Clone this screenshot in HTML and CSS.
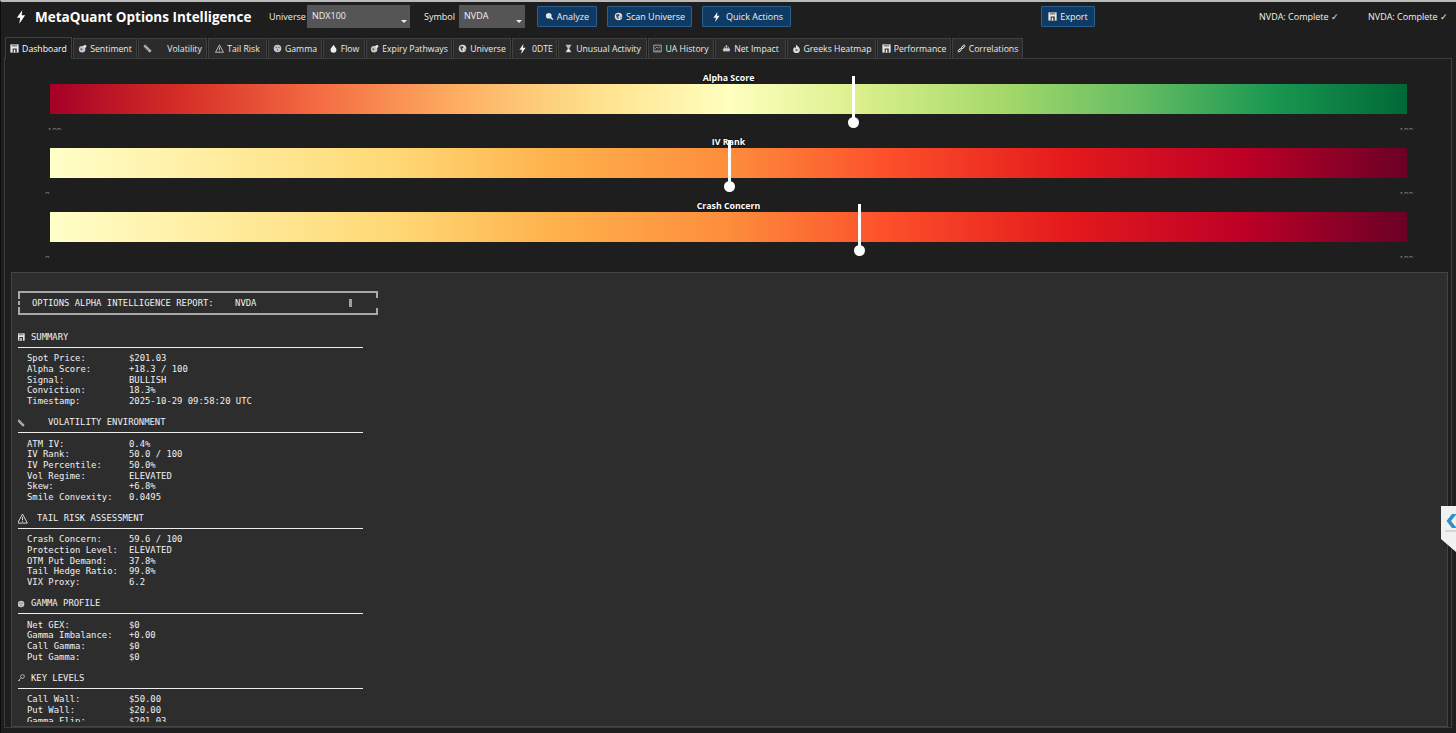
FILE: index.html
```html
<!DOCTYPE html>
<html lang="en">
<head>
<meta charset="utf-8">
<title>MetaQuant Options Intelligence</title>
<link rel="stylesheet" href="styles.css">
</head>
<body>
<svg class="defs" aria-hidden="true">
  <symbol id="i-bolt" viewBox="0 0 12 16"><path d="M7.5 0 1 9h4l-1 7 7-10H6.8z" fill="currentColor"/></symbol>
  <symbol id="i-save" viewBox="0 0 12 12"><path d="M.5.5h11v11H.5z" fill="#e8e8e8"/><path d="M2.500.5h7v3h-7z" fill="#8c8c8c"/><path d="M3.500 6h5.500v5.500H3.500z" fill="#333"/><path d="M5 7.500h2v4H5z" fill="#f4f4f4"/></symbol>
  <symbol id="i-senti" viewBox="0 0 12 12"><circle cx="5.500" cy="7" r="4.300" fill="#c8c8c8"/><path d="M6.500 2.500l3.500-1.500 1.500 2.500-3 2z" fill="#eee"/><circle cx="4.500" cy="7" r="1.300" fill="#555"/></symbol>
  <symbol id="i-ruler" viewBox="0 0 12 12"><path d="M.5 3 3 .5l8.500 8.500-2.500 2.500z" fill="#b4b4b4"/><path d="M3 4l1.200-1.200M5 6l1.200-1.200M7 8l1.200-1.200" stroke="#444" stroke-width=".8"/></symbol>
  <symbol id="i-warn" viewBox="0 0 12 12"><path d="M6 1.200 11.300 11H.7z" fill="none" stroke="#e6e6e6"/><path d="M6 4.500v3.500M6 9v1" stroke="#e6e6e6"/></symbol>
  <symbol id="i-gamma" viewBox="0 0 12 12"><circle cx="6" cy="6" r="5" fill="#c6c6c6"/><circle cx="4.300" cy="4.700" r=".9" fill="#555"/><circle cx="7.700" cy="4.700" r=".9" fill="#555"/><circle cx="6" cy="8" r=".9" fill="#555"/></symbol>
  <symbol id="i-drop" viewBox="0 0 12 12"><path d="M6 1C7.500 4 10 5.500 10 7.700a4 4 0 0 1-8 0C2 5.500 4.500 4 6 1z" fill="#eee"/></symbol>
  <symbol id="i-globe" viewBox="0 0 12 12"><circle cx="6" cy="6" r="5" fill="#ddd"/><path d="M2.500 3.500 6.500 2.500l1 2.500-2 1 1 4-2.500-2zM9 6l1.500.5-2 2.500z" fill="#444"/></symbol>
  <symbol id="i-search" viewBox="0 0 12 12"><circle cx="5" cy="5" r="3.800" fill="#dfe6ee"/><path d="M7.500 7.500l3 2.500" stroke="#eee" stroke-width="2"/></symbol>
  <symbol id="i-hour" viewBox="0 0 12 12"><path d="M2 1h8L7 6l3 5H2l3-5z" fill="#bbb"/><path d="M3.500 10h5L6 7z" fill="#fff"/></symbol>
  <symbol id="i-chart" viewBox="0 0 12 12"><path d="M1 1.500h10v9H1z" fill="none" stroke="#ccc"/><path d="M2.500 7l2.500-3 2 1.500L9.500 3.500M2.500 9h7" fill="none" stroke="#ccc" stroke-width=".8"/></symbol>
  <symbol id="i-ship" viewBox="0 0 14 12"><path d="M6 .8h2v2.500h2.500v2.500l2.500 1-1.500 3.700h-9L1 6.800l2.500-1V3.300H6z" fill="#ccc"/><path d="M5 4h1.200v1.300H5zM7.800 4H9v1.300H7.800zM1 11h12" stroke="#444" stroke-width=".8"/></symbol>
  <symbol id="i-fire" viewBox="0 0 12 12"><path d="M6 .5c.5 2 4.500 3.500 4.500 7a4.500 4.500 0 0 1-9 0C1.500 6 3 5 3.700 4 4 5 4.500 5.300 5 5.300 5 3.800 5.300 2 6 .5z" fill="#ddd"/><circle cx="6" cy="8" r="1.500" fill="#666"/></symbol>
  <symbol id="i-link" viewBox="0 0 12 12"><path d="M2.500 9.500l2.500-2.500M7 5l2.500-2.500" stroke="#d4d4d4" stroke-width="3.400" stroke-linecap="round"/><path d="M2.500 9.500l2.500-2.500M7 5l2.500-2.500" stroke="#333" stroke-width="1.200" stroke-linecap="round"/></symbol>
  <symbol id="i-key" viewBox="0 0 12 12"><circle cx="8.300" cy="3.700" r="2.800" fill="none" stroke="#ccc" stroke-width="1.200"/><path d="M6.300 5.700 1.300 10.700M3 9l1.500 1.500" stroke="#ccc" stroke-width="1.200"/></symbol>
</svg>

<div class="app">
  <header class="topbar">
    <svg class="brand-icon"><use href="#i-bolt"/></svg>
    <h1 class="brand">MetaQuant Options Intelligence</h1>
    <label class="field-label field-universe">Universe</label>
    <div class="select select-universe">NDX100<span class="caret"></span></div>
    <label class="field-label field-symbol">Symbol</label>
    <div class="select select-symbol">NVDA<span class="caret"></span></div>
    <button class="btn btn-analyze"><svg class="ico"><use href="#i-search"/></svg>Analyze</button>
    <button class="btn btn-scan"><svg class="ico"><use href="#i-globe"/></svg>Scan Universe</button>
    <button class="btn btn-quick"><svg class="ico ico-bolt"><use href="#i-bolt"/></svg>Quick Actions</button>
    <button class="btn btn-export"><svg class="ico"><use href="#i-save"/></svg>Export</button>
    <span class="status status-a">NVDA: Complete ✓</span>
    <span class="status status-b">NVDA: Complete ✓</span>
  </header>

  <nav class="tabs">
    <div class="tab active w-dash"><svg class="ico"><use href="#i-save"/></svg>Dashboard</div>
    <div class="tab w-senti"><svg class="ico"><use href="#i-senti"/></svg>Sentiment</div>
    <div class="tab w-vol"><svg class="ico ico-wide"><use href="#i-ruler"/></svg>Volatility</div>
    <div class="tab w-tail"><svg class="ico"><use href="#i-warn"/></svg>Tail Risk</div>
    <div class="tab w-gamma"><svg class="ico"><use href="#i-gamma"/></svg>Gamma</div>
    <div class="tab w-flow"><svg class="ico"><use href="#i-drop"/></svg>Flow</div>
    <div class="tab w-exp"><svg class="ico"><use href="#i-senti"/></svg>Expiry Pathways</div>
    <div class="tab w-uni"><svg class="ico"><use href="#i-globe"/></svg>Universe</div>
    <div class="tab w-dte"><svg class="ico ico-bolt"><use href="#i-bolt"/></svg>0DTE</div>
    <div class="tab w-ua"><svg class="ico"><use href="#i-hour"/></svg>Unusual Activity</div>
    <div class="tab w-hist"><svg class="ico"><use href="#i-chart"/></svg>UA History</div>
    <div class="tab w-net"><svg class="ico"><use href="#i-ship"/></svg>Net Impact</div>
    <div class="tab w-heat"><svg class="ico"><use href="#i-fire"/></svg>Greeks Heatmap</div>
    <div class="tab w-perf"><svg class="ico"><use href="#i-save"/></svg>Performance</div>
    <div class="tab w-corr"><svg class="ico"><use href="#i-link"/></svg>Correlations</div>
  </nav>

  <main class="pane">
    <section class="gauges">
      <div class="gauge">
        <div class="gauge-title">Alpha Score</div>
        <div class="bar bar-alpha"></div>
        <div class="ticks"><span>-100</span><span>100</span></div>
        <div class="track"><div class="needle" style="left:59.15%"></div></div>
      </div>
      <div class="gauge">
        <div class="gauge-title">IV Rank</div>
        <div class="bar bar-heat"></div>
        <div class="ticks"><span>0</span><span>100</span></div>
        <div class="track"><div class="needle" style="left:50%"></div></div>
      </div>
      <div class="gauge">
        <div class="gauge-title">Crash Concern</div>
        <div class="bar bar-heat"></div>
        <div class="ticks"><span>0</span><span>100</span></div>
        <div class="track"><div class="needle" style="left:59.6%"></div></div>
      </div>
    </section>

    <section class="report">
      <div class="report-scroll">
        <div class="report-box">
          <span class="report-title">OPTIONS ALPHA INTELLIGENCE REPORT:    NVDA</span>
          <span class="box-bar"></span>
        </div>
        <div class="blank blank-lg"></div>

        <h2 class="sec"><svg class="sec-ico"><use href="#i-save"/></svg>SUMMARY</h2>
        <div class="rule"></div>
        <div class="kv"><span>Spot Price:</span><span>$201.03</span></div>
        <div class="kv"><span>Alpha Score:</span><span>+18.3 / 100</span></div>
        <div class="kv"><span>Signal:</span><span>BULLISH</span></div>
        <div class="kv"><span>Conviction:</span><span>18.3%</span></div>
        <div class="kv"><span>Timestamp:</span><span>2025-10-29 09:58:20 UTC</span></div>
        <div class="blank"></div>

        <h2 class="sec"><svg class="sec-ico sec-ico-wide"><use href="#i-ruler"/></svg>VOLATILITY ENVIRONMENT</h2>
        <div class="rule"></div>
        <div class="kv"><span>ATM IV:</span><span>0.4%</span></div>
        <div class="kv"><span>IV Rank:</span><span>50.0 / 100</span></div>
        <div class="kv"><span>IV Percentile:</span><span>50.0%</span></div>
        <div class="kv"><span>Vol Regime:</span><span>ELEVATED</span></div>
        <div class="kv"><span>Skew:</span><span>+6.8%</span></div>
        <div class="kv"><span>Smile Convexity:</span><span>0.0495</span></div>
        <div class="blank"></div>

        <h2 class="sec"><svg class="sec-ico sec-ico-warn"><use href="#i-warn"/></svg>TAIL RISK ASSESSMENT</h2>
        <div class="rule"></div>
        <div class="kv"><span>Crash Concern:</span><span>59.6 / 100</span></div>
        <div class="kv"><span>Protection Level:</span><span>ELEVATED</span></div>
        <div class="kv"><span>OTM Put Demand:</span><span>37.8%</span></div>
        <div class="kv"><span>Tail Hedge Ratio:</span><span>99.8%</span></div>
        <div class="kv"><span>VIX Proxy:</span><span>6.2</span></div>
        <div class="blank"></div>

        <h2 class="sec"><svg class="sec-ico"><use href="#i-gamma"/></svg>GAMMA PROFILE</h2>
        <div class="rule"></div>
        <div class="kv"><span>Net GEX:</span><span>$0</span></div>
        <div class="kv"><span>Gamma Imbalance:</span><span>+0.00</span></div>
        <div class="kv"><span>Call Gamma:</span><span>$0</span></div>
        <div class="kv"><span>Put Gamma:</span><span>$0</span></div>
        <div class="blank"></div>

        <h2 class="sec"><svg class="sec-ico"><use href="#i-key"/></svg>KEY LEVELS</h2>
        <div class="rule"></div>
        <div class="kv"><span>Call Wall:</span><span>$50.00</span></div>
        <div class="kv"><span>Put Wall:</span><span>$20.00</span></div>
        <div class="kv"><span>Gamma Flip:</span><span>$201.03</span></div>
      </div>
    </section>
  </main>
</div>

<div class="side-tab"><svg viewBox="0 0 15 46" class="side-svg"><path d="M0 0h15v46L0 33z" fill="#f1f1f1"/><path d="M11 8 5.500 15l5.500 7h4.500L10 15l5.500-7z" fill="#2f8fc8"/><path d="M4 25h11" stroke="#bbb"/></svg></div>
</body>
</html>
```

FILE: styles.css
```css
* { box-sizing: border-box; }
html, body { margin: 0; padding: 0; height: 100%; overflow: hidden; }
body { background: #1e1e1e; color: #f0f0f0; font-family: "Open Sans", "Noto Sans", sans-serif; font-size: 9px; }
.defs { position: absolute; width: 0; height: 0; }

.app { height: 733px; display: flex; flex-direction: column; border-top: 2px solid #b9b9b9; border-left: 1px solid #0c0c0c; }

.topbar { height: 27px; display: flex; align-items: center; flex: none; padding-left: 15px; padding-top: 2px; }
.brand-icon { width: 10px; height: 14px; color: #fff; flex: none; margin-right: 9px; }
.brand { font-size: 13.5px; font-weight: 700; color: #fff; margin: 0; white-space: nowrap; width: 234px; }
.field-label { white-space: nowrap; color: #f0f0f0; }
.field-universe { width: 38px; }
.field-symbol { width: 35px; margin-left: 14px; }
.select { height: 23px; background: #555; position: relative; padding: 5px 0 0 5px; line-height: 12px; color: #f2f2f2; flex: none; }
.select-universe { width: 103px; }
.select-symbol { width: 66px; }
.caret { position: absolute; right: 3px; bottom: 5px; border-left: 3px solid transparent; border-right: 3px solid transparent; border-top: 3px solid #eee; }

.btn { height: 21px; background: #0e3a63; border: 1px solid #2a5f92; border-radius: 1px; color: #f0f0f0; font: inherit; padding: 0; display: inline-flex; align-items: center; justify-content: center; flex: none; white-space: nowrap; }
.btn-analyze { width: 60px; margin-left: 12px; }
.btn-scan { width: 85px; margin-left: 10px; }
.btn-quick { width: 89px; margin-left: 10px; }
.btn-export { width: 54px; margin-left: 250px; }
.status { white-space: nowrap; color: #f0f0f0; flex: none; }
.status-a { margin-left: 164px; width: 109px; }
.status-b { width: 80px; }

.ico { width: 9px; height: 9px; flex: none; margin-right: 3px; color: #f0f0f0; }
.ico-bolt { height: 10px; margin: 0 5px 0 2px; }
.ico-wide { margin-right: 15px; }

.tabs { display: flex; flex: none; height: 21px; margin-top: 8px; padding-left: 4px; gap: 1px; align-items: flex-end; position: relative; z-index: 1; }
.tab { height: 20px; background: #2b2b2b; border: 1px solid #404040; border-bottom: none; display: flex; align-items: center; justify-content: center; white-space: nowrap; color: #ececec; flex: none; font-size: 8.7px; }
.tab.active { background: #1e1e1e; height: 22px; margin-bottom: -1px; color: #fff; }
.w-dash { width: 67px; } .w-senti { width: 64px; } .w-vol { width: 69px; } .w-tail { width: 59px; }
.w-gamma { width: 54px; } .w-flow { width: 42px; } .w-exp { width: 86px; } .w-uni { width: 58px; }
.w-dte { width: 45px; } .w-ua { width: 89px; } .w-hist { width: 66px; } .w-net { width: 71px; }
.w-heat { width: 89px; } .w-perf { width: 74px; } .w-corr { width: 71px; }

.pane { flex: 1; min-height: 0; margin: 0 4px 5px 3px; border: 1px solid #3c3c3c; display: flex; flex-direction: column; padding: 13px 3px 0 6px; }
.gauges { flex: none; }
.gauge { height: 64px; position: relative; padding: 0 41px 0 39px; overflow: visible; }
.gauge-title { height: 12px; line-height: 12px; text-align: center; font-size: 8.8px; font-weight: 700; color: #fff; text-shadow: 0 0 2px #000; position: relative; z-index: 1; }
.bar { height: 30px; }
.bar-alpha { background: linear-gradient(90deg, #a50026 0%, #d73027 10%, #f46d43 20%, #fdae61 30%, #fee08b 40%, #ffffbf 50%, #d9ef8b 60%, #a6d96a 70%, #66bd63 80%, #1a9850 90%, #006837 100%); }
.bar-heat { background: linear-gradient(90deg, #ffffc8 0%, #ffeda0 12%, #fed976 25%, #feb24c 37%, #fd8d3c 50%, #fc4e2a 62%, #e31a1c 75%, #bd0026 88%, #6b0026 100%); }
.ticks { height: 16px; overflow: hidden; display: flex; justify-content: space-between; font-size: 8px; line-height: 12px; color: #8a8a8a; padding-top: 10px; margin: 0 -6px 0 -5px; }
.track { position: absolute; left: 39px; right: 41px; top: 0; bottom: 0; pointer-events: none; z-index: 2; }
.needle { position: absolute; top: 4px; width: 3px; height: 47px; margin-left: -1px; background: #fff; }
.needle::after { content: ""; position: absolute; left: -4px; bottom: -5px; width: 11px; height: 11px; border-radius: 50%; background: #fff; }

.report { flex: 1; min-height: 0; background: #2d2d2d; border: 1px solid #444; margin-top: 8px; padding: 18px 0 4px 6px; display: flex; font-family: "DejaVu Sans Mono", "Liberation Mono", monospace; font-size: 8.9px; line-height: 10.67px; color: #f0f0f0; }
.report-scroll { flex: 1; min-height: 0; overflow: hidden; }
.report-box { width: 360px; height: 24px; border-top: 2px solid #a9a9a9; border-bottom: 2px solid #a9a9a9; position: relative; display: flex; align-items: center; padding-left: 14px; }
.report-box::before { content: ""; position: absolute; left: 0; top: 0; bottom: 0; width: 2px; background: linear-gradient(#a9a9a9 0 6px, transparent 6px 8px, #a9a9a9 8px 12px, transparent 12px 14px, #a9a9a9 14px); }
.report-box::after { content: ""; position: absolute; right: 0; top: 0; bottom: 0; width: 2px; background: linear-gradient(#a9a9a9 0 5px, transparent 5px 15px, #a9a9a9 15px); }
.report-title { white-space: pre; }
.box-bar { position: absolute; right: 26px; top: 6px; width: 3px; height: 8px; background: #a0a0a0; }
.blank { height: 10.67px; }
.blank-lg { height: 17px; }
.sec { margin: 0; height: 10.67px; font: inherit; font-weight: 400; display: flex; align-items: center; white-space: pre; color: #f0f0f0; }
.sec-ico { width: 8px; height: 8px; margin-right: 6px; flex: none; margin-left: -1px; }
.sec-ico-wide { margin-right: 23px; }
.sec-ico-warn { width: 11px; height: 11px; margin-right: 9px; }
.rule { height: 10.67px; width: 346px; margin-left: -1px; position: relative; }
.rule::before { content: ""; position: absolute; left: 0; right: 0; top: 4px; height: 1px; background: #eee; }
.kv { height: 10.67px; display: flex; padding-left: 9px; white-space: pre; }
.kv span:first-child { width: 102px; flex: none; }

.side-tab { position: fixed; right: 0; top: 506px; width: 15px; height: 46px; }
.side-svg { display: block; width: 15px; height: 46px; }
```
